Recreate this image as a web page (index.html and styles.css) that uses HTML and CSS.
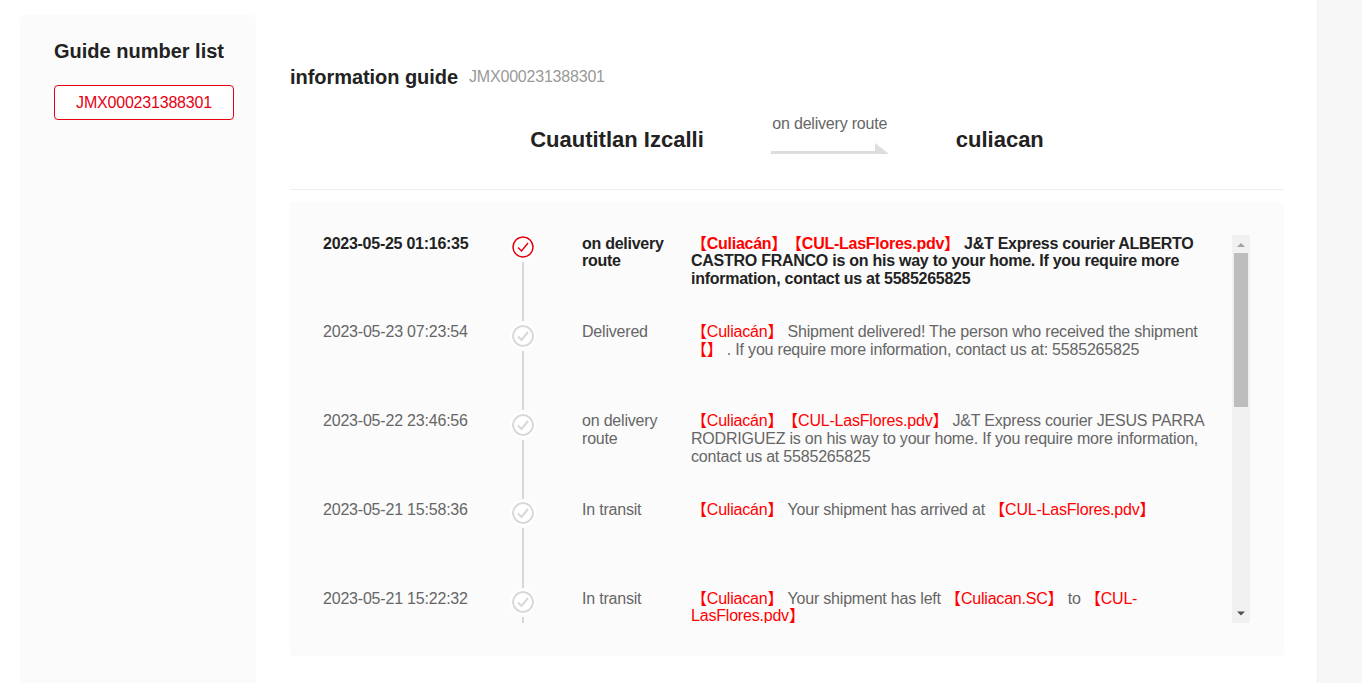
FILE: index.html
```html
<!DOCTYPE html>
<html lang="en">
<head>
  <meta charset="UTF-8" />
  <meta name="viewport" content="width=device-width, initial-scale=1.0"/>
  <title>Guide tracking</title>
  <link rel="stylesheet" href="styles.css">
</head>
<body>
  <div class="page">
    <aside class="sidebar">
      <h3>Guide number list</h3>
      <button class="guide-btn">JMX000231388301</button>
    </aside>

    <main class="content">
      <div class="info-title">
        <h2>information guide</h2>
        <span>JMX000231388301</span>
      </div>

      <div class="route">
        <strong class="city">Cuautitlan Izcalli</strong>
        <div class="route-status">
          <span>on delivery route</span>
          <svg width="118" height="12" viewBox="0 0 118 12"><path d="M0 8h104V0l14 11H0z" fill="#dddddd"/></svg>
        </div>
        <strong class="city">culiacan</strong>
      </div>

      <div class="panel">
        <div class="list">
          <div class="row current">
            <div class="time">2023-05-25 01:16:35</div>
            <div class="mark">
              <svg class="check" width="22" height="22" viewBox="0 0 22 22"><circle cx="11" cy="11" r="10" fill="#fff" stroke="#e60012" stroke-width="1.5"/><path d="M6 11.500l3.500 3.500L16 7" fill="none" stroke="#e60012" stroke-width="1.5"/></svg>
              <i class="line"></i>
            </div>
            <div class="status">on delivery route</div>
            <div class="msg"><em>【Culiacán】</em><em class="next">【CUL-LasFlores.pdv】</em> J&amp;T Express courier ALBERTO CASTRO FRANCO is on his way to your home. If you require more information, contact us at 5585265825</div>
          </div>
          <div class="row">
            <div class="time">2023-05-23 07:23:54</div>
            <div class="mark">
              <svg class="check" width="22" height="22" viewBox="0 0 22 22"><circle cx="11" cy="11" r="10" fill="#fff" stroke="#d8d8d8" stroke-width="2"/><path d="M6 11.500l3.500 3.500L16 7" fill="none" stroke="#d8d8d8" stroke-width="2"/></svg>
              <i class="line"></i>
            </div>
            <div class="status">Delivered</div>
            <div class="msg"><em>【Culiacán】</em> Shipment delivered! The person who received the shipment <em>【】</em> . If you require more information, contact us at: 5585265825</div>
          </div>
          <div class="row">
            <div class="time">2023-05-22 23:46:56</div>
            <div class="mark">
              <svg class="check" width="22" height="22" viewBox="0 0 22 22"><circle cx="11" cy="11" r="10" fill="#fff" stroke="#d8d8d8" stroke-width="2"/><path d="M6 11.500l3.500 3.500L16 7" fill="none" stroke="#d8d8d8" stroke-width="2"/></svg>
              <i class="line"></i>
            </div>
            <div class="status">on delivery route</div>
            <div class="msg"><em>【Culiacán】</em><em class="next">【CUL-LasFlores.pdv】</em> J&amp;T Express courier JESUS PARRA RODRIGUEZ is on his way to your home. If you require more information, contact us at 5585265825</div>
          </div>
          <div class="row">
            <div class="time">2023-05-21 15:58:36</div>
            <div class="mark">
              <svg class="check" width="22" height="22" viewBox="0 0 22 22"><circle cx="11" cy="11" r="10" fill="#fff" stroke="#d8d8d8" stroke-width="2"/><path d="M6 11.500l3.500 3.500L16 7" fill="none" stroke="#d8d8d8" stroke-width="2"/></svg>
              <i class="line"></i>
            </div>
            <div class="status">In transit</div>
            <div class="msg"><em>【Culiacán】</em> Your shipment has arrived at <em>【CUL-LasFlores.pdv】</em></div>
          </div>
          <div class="row">
            <div class="time">2023-05-21 15:22:32</div>
            <div class="mark">
              <svg class="check" width="22" height="22" viewBox="0 0 22 22"><circle cx="11" cy="11" r="10" fill="#fff" stroke="#d8d8d8" stroke-width="2"/><path d="M6 11.500l3.500 3.500L16 7" fill="none" stroke="#d8d8d8" stroke-width="2"/></svg>
              <i class="line"></i>
            </div>
            <div class="status">In transit</div>
            <div class="msg"><em>【Culiacan】</em> Your shipment has left <em>【Culiacan.SC】</em> to <em>【CUL-LasFlores.pdv】</em></div>
          </div>
        </div>

        <div class="scrollbar">
          <svg width="18" height="18" viewBox="0 0 18 18"><path d="M5 12h8L9 8z" fill="#a3a3a3"/></svg>
          <div class="thumb"></div>
          <svg class="arrow-down" width="18" height="18" viewBox="0 0 18 18"><path d="M5 6.500h8L9 10.500z" fill="#505050"/></svg>
        </div>
      </div>
    </main>

    <div class="side-strip"></div>
  </div>
</body>
</html>
```

FILE: styles.css
```css
* {
  box-sizing: border-box;
}
html, body {
  height: 100%;
}
body {
  margin: 0;
  overflow: hidden;
  background: #fff;
  color: #222;
  font-family: "Liberation Sans", Arial, "Noto Sans CJK SC", sans-serif;
  font-size: 16px;
  letter-spacing: -0.2px;
}
.page {
  display: flex;
  height: 683px;
  overflow: hidden;
}
.sidebar {
  width: 236px;
  margin: 15px 0 0 20px;
  padding: 24px 22px 0 34px;
  background: #fbfbfb;
  border-radius: 4px 4px 0 0;
  flex-shrink: 0;
}
.sidebar h3 {
  margin: 0;
  font-size: 20px;
  line-height: 24px;
  font-weight: bold;
  letter-spacing: 0;
}
.guide-btn {
  display: block;
  width: 180px;
  height: 35px;
  margin-top: 22px;
  padding: 0;
  background: #fff;
  border: 1px solid #e60012;
  border-radius: 4px;
  color: #e60012;
  font: inherit;
  letter-spacing: inherit;
}
.content {
  width: 994px;
  margin-left: 34px;
  flex-shrink: 0;
}
.info-title {
  display: flex;
  align-items: center;
  gap: 11px;
  margin-top: 65px;
}
.info-title h2 {
  margin: 0;
  font-size: 20px;
  line-height: 24px;
  font-weight: bold;
  letter-spacing: -0.05px;
}
.info-title span {
  color: #999;
}
.route {
  display: flex;
  justify-content: center;
  align-items: center;
  gap: 67px;
  height: 101px;
  padding-top: 2px;
  border-bottom: 1px solid #eee;
}
.city {
  font-size: 22px;
  line-height: 26px;
  letter-spacing: 0;
}
.route-status {
  display: flex;
  flex-direction: column;
  gap: 10px;
  margin-bottom: 10px;
  color: #666;
  text-align: center;
}
.route-status span {
  line-height: 18px;
}
.route-status svg {
  display: block;
}
.panel {
  display: flex;
  height: 454px;
  margin-top: 12px;
  padding: 33px 34px 33px 33px;
  background: #fbfbfb;
  border-radius: 4px;
}
.list {
  flex: 1;
  margin-top: -0.3px;
  overflow: hidden;
}
.row {
  display: grid;
  grid-template-columns: 178px 44px 146px 1fr;
  height: 88.75px;
  padding-right: 24px;
  color: #666;
  line-height: 17.7px;
}
.row.current {
  color: #222;
  font-weight: bold;
  letter-spacing: -0.26px;
}
.mark {
  display: flex;
  flex-direction: column;
  align-items: center;
  padding-top: 1.3px;
}
.check {
  flex-shrink: 0;
  border-radius: 50%;
  box-shadow: 0 0 0 2px #fff;
}
.line {
  display: block;
  flex: 1;
  width: 2px;
  margin: 4px 0 2px;
  background: #d8d8d8;
}
.status {
  padding-left: 37px;
  padding-right: 18px;
}
.msg em {
  font-style: normal;
  color: #f00;
}
.msg .next {
  margin-left: 7px;
}
.scrollbar {
  display: flex;
  flex-direction: column;
  align-items: center;
  width: 18px;
  background: #f1f1f1;
}
.scrollbar svg {
  display: block;
  flex-shrink: 0;
}
.thumb {
  width: 14px;
  height: 154px;
  background: #bdbdbd;
}
.arrow-down {
  margin-top: auto;
}
.side-strip {
  flex: 1;
  margin-left: 33px;
  background: #f7f7f7;
  border-left: 1px solid #f0f0f0;
}
```
